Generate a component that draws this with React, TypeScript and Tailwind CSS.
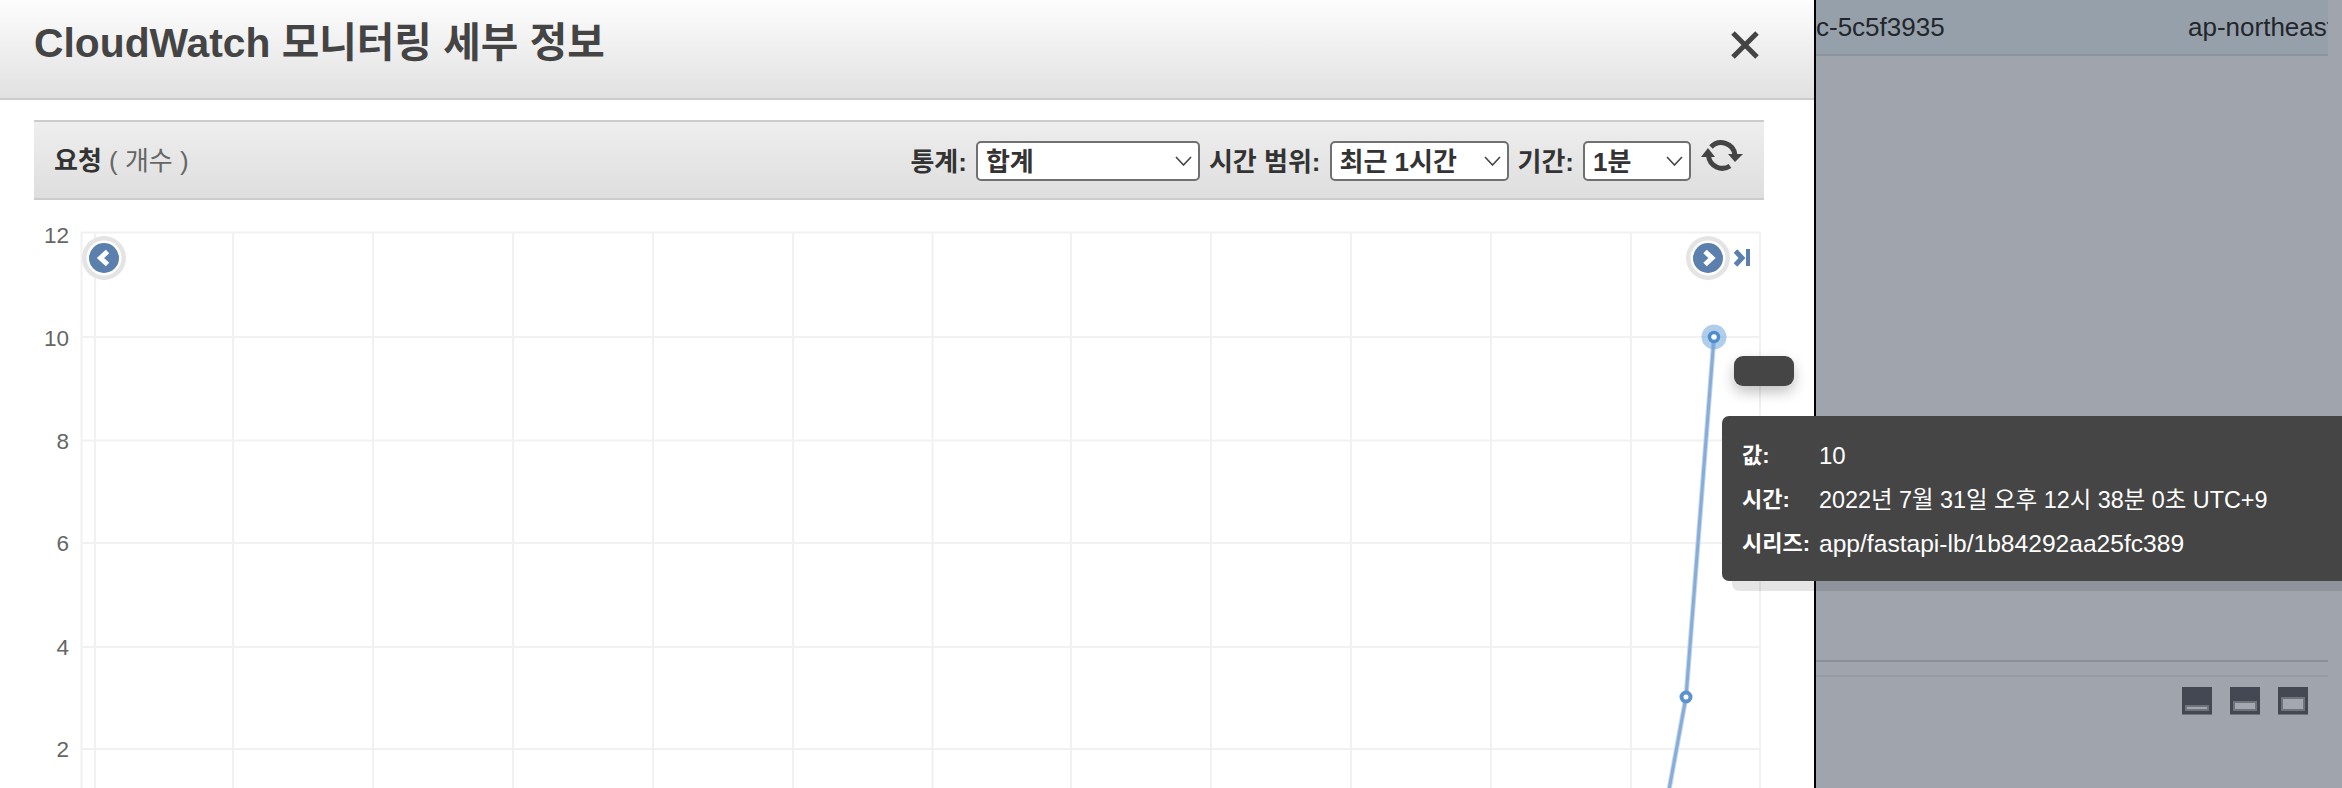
import React from "react";

const FONT = "font-['Liberation_Sans','Noto_Sans_CJK_KR',sans-serif]";

function Chevron() {
  return (
    <svg width="17" height="10" viewBox="0 0 17 10" className="shrink-0">
      <path d="M1 1l7.5 8 7.5-8" fill="none" stroke="#444" strokeWidth="1.6" />
    </svg>
  );
}

function Select({ w, text }: { w: string; text: string }) {
  return (
    <div className={`${w} h-10 flex items-center justify-between pl-2 pr-[6px] bg-white border-2 border-[#707070] rounded-[5px] text-[26px] font-bold text-[#333]`}>
      <span className="pt-[2px]">{text}</span>
      <Chevron />
    </div>
  );
}

function Chart() {
  const vs = [81.5, 95, 233, 373, 513, 653, 793, 932.5, 1071, 1211, 1351, 1491, 1631, 1760];
  const hs = [232.5, 337, 440.5, 543, 647, 749];
  const baselines = [243, 345.5, 449, 551, 655, 757];
  const labels = ["12", "10", "8", "6", "4", "2"];
  return (
    <svg width="1814" height="588" viewBox="0 200 1814 588" className="block">
      {vs.map((x) => (
        <line key={x} x1={x} x2={x} y1={232} y2={788} stroke="#f1f1f2" strokeWidth="2" />
      ))}
      {hs.map((y) => (
        <line key={y} x1={81} x2={1760} y1={y} y2={y} stroke="#f1f1f2" strokeWidth="2" />
      ))}
      {hs.map((y, i) => (
        <text key={y} x={69} y={baselines[i]} textAnchor="end" fontSize="22.5" fill="#666">
          {labels[i]}
        </text>
      ))}
      <polyline points="1669,790 1686,697 1714,337" fill="none" stroke="#c4d6ec" strokeWidth="5" />
      <polyline points="1669,790 1686,697 1714,337" fill="none" stroke="#86acd8" strokeWidth="3" />
      <circle cx="1714" cy="337" r="12.5" fill="#6fa5dc" fillOpacity="0.55" />
      <circle cx="1714" cy="337" r="4.5" fill="#fff" stroke="#4f8ccb" strokeWidth="3.5" />
      <circle cx="1686" cy="697" r="4.5" fill="#fff" stroke="#5c93cf" strokeWidth="4" />
      <circle cx="104" cy="258" r="22" fill="#e4e4e4" />
      <circle cx="104" cy="258" r="17.5" fill="#fff" />
      <circle cx="104" cy="258" r="15" fill="#5b80ad" />
      <path d="M107.5 251.5l-7 6.5 7 6.5" fill="none" stroke="#fff" strokeWidth="5" />
      <circle cx="1708" cy="258" r="22" fill="#e4e4e4" />
      <circle cx="1708" cy="258" r="17.5" fill="#fff" />
      <circle cx="1708" cy="258" r="15" fill="#5b80ad" />
      <path d="M1705 251.5l7 6.5-7 6.5" fill="none" stroke="#fff" strokeWidth="5" />
      <path d="M1735.5 251l6.5 7-6.5 7" fill="none" stroke="#5b80ad" strokeWidth="5" />
      <rect x="1746" y="249" width="4" height="17" fill="#5b80ad" />
    </svg>
  );
}

export default function App() {
  return (
    <div className={`${FONT} relative flex w-[2342px] h-[788px] overflow-hidden bg-[#a0a4ad]`}>
      <div className="w-[1814px] h-full shrink-0 bg-white">
        <div className="h-[100px] flex items-center justify-between pl-[34px] pr-[55px] pb-[10px] border-b-2 border-[#cccccc] bg-gradient-to-b from-[#fdfdfd] to-[#e1e1e1]">
          <h1 className="text-[40.8px] font-bold text-[#444]">CloudWatch 모니터링 세부 정보</h1>
          <svg width="28" height="28" viewBox="0 0 28 28" className="mt-[2px]">
            <path d="M2 2l24 24M26 2L2 26" stroke="#444" strokeWidth="5" />
          </svg>
        </div>
        <div className="mt-5 ml-[34px] w-[1730px] h-20 flex items-center justify-between pl-5 pr-[21px] border-y-2 border-[#cccccc] bg-gradient-to-b from-[#eeeeee] to-[#dedede] text-[#333]">
          <div className="text-[26px] pt-[3px]">
            <span className="font-bold">요청</span>
            <span className="text-[#666]"> ( 개수 )</span>
          </div>
          <div className="flex items-center gap-[9px] mt-[2px] text-[26px] font-bold">
            <span className="pt-[2px]">통계:</span>
            <Select w="w-[224px]" text="합계" />
            <span className="pt-[2px]">시간 범위:</span>
            <Select w="w-[179px]" text="최근 1시간" />
            <span className="pt-[2px]">기간:</span>
            <Select w="w-[108px]" text="1분" />
            <svg width="42" height="33" viewBox="0 0 42 33" className="-mt-[12px] ml-px" fill="#444">
              <path d="M10 8A14 14 0 0 1 34 16M29 27A14 14 0 0 1 7.5 17" fill="none" stroke="#444" strokeWidth="5" />
              <path d="M27 15h15l-8 8zM0 18h14L7 9z" />
            </svg>
          </div>
        </div>
        <Chart />
      </div>
      <div className="w-[2px] h-full shrink-0 bg-black" />
      <div className="flex-1 flex flex-col pr-[14px]">
        <div className="h-[56px] flex items-center justify-between bg-[#96a0aa] border-b-2 border-[#8b939d] text-[26px] text-[#22262b] whitespace-nowrap">
          <span>c-5c5f3935</span>
          <span className="w-[140px] overflow-hidden">ap-northeast-1a</span>
        </div>
        <div className="mt-[604px] h-[2px] bg-[#8a8e99]" />
        <div className="mt-[13px] h-[2px] bg-[#979ba4]" />
        <div className="mt-[10px] ml-[366px] flex gap-[18px]">
          {["h-[6px]", "h-[10px]", "h-[14px]"].map((h) => (
            <div key={h} className="w-[30px] h-7 flex items-end justify-center pb-[3px] bg-[#434852] border-b border-[#6f737c]">
              <div className={`${h} w-6 bg-[#a3a7b0] border-2 border-[#6f737c]`} />
            </div>
          ))}
        </div>
      </div>

      <div className="absolute left-[1734px] top-[356px] w-[60px] h-[30px] rounded-[9px] bg-[#454545] shadow-[0_6px_14px_rgba(0,0,0,0.25)]" />
      <div className="absolute left-[1722px] top-[416px] w-[620px] h-[165px] pl-[20px] pt-[18px] rounded-l-[7px] bg-[#454545] text-white leading-[44px] shadow-[10px_10px_0_rgba(0,0,0,0.1)]">
        <div className="grid grid-cols-[77px_1fr]">
          <b className="text-[22px]">값:</b>
          <span className="text-[24px]">10</span>
          <b className="text-[22px]">시간:</b>
          <span className="text-[23.4px]">2022년 7월 31일 오후 12시 38분 0초 UTC+9</span>
          <b className="text-[22px] whitespace-nowrap">시리즈:</b>
          <span className="text-[24.6px]">app/fastapi-lb/1b84292aa25fc389</span>
        </div>
      </div>
    </div>
  );
}
